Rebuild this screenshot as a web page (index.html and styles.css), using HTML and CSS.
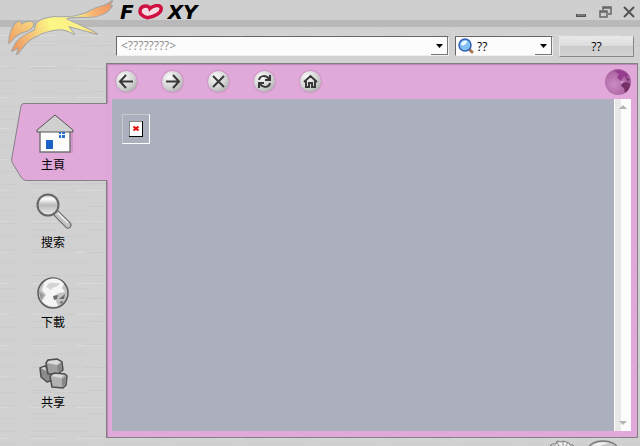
FILE: index.html
```html
<!DOCTYPE html>
<html lang="zh-Hant">
<head>
<meta charset="utf-8">
<meta name="viewport" content="width=device-width, initial-scale=1">
<title>Foxy</title>
<link rel="stylesheet" href="styles.css">
</head>
<body>
<div class="app">
  <header class="header">
    <svg class="fox" viewBox="0 0 116 62" aria-hidden="true">
      <defs>
        <linearGradient id="fur" gradientUnits="userSpaceOnUse" x1="10" y1="50" x2="112" y2="0">
          <stop offset="0" stop-color="#ec9058"/>
          <stop offset=".2" stop-color="#f4bd78"/>
          <stop offset=".42" stop-color="#fcf684"/>
          <stop offset=".65" stop-color="#fbf089"/>
          <stop offset=".8" stop-color="#f6b472"/>
          <stop offset="1" stop-color="#f19060"/>
        </linearGradient>
        <linearGradient id="head" x1="0" x2="1" y1="1" y2="0">
          <stop offset="0" stop-color="#ee9c60"/>
          <stop offset="1" stop-color="#f8d882"/>
        </linearGradient>
      </defs>
      <g class="fox-shape">
        <path fill="url(#head)" d="M9 43C9 35 13 24 18 22C22 21 21 24 21 25C26 21 32 21 33 23C34 28 28 31 23 32C17 34 13 38 9 43Z"/>
        <path fill="url(#fur)" d="M36 25C38 20 46 18 55 17C70 18 82 16 92 10C99 6 106 7 112 1L109 7L112 6C107 14 98 17 86 17C78 17 70 16 66 19C75 24 88 28 97 34C87 31 77 28 68 26L74 34C68 30 61 28 53 30C43 32 33 37 27 42L17 54L19 47L12 51L16 43C21 36 30 33 35 30Z"/>
      </g>
    </svg>
    <div class="titlebar">
      <h1 class="brand" aria-label="FOXY">
        <span>F</span>
        <svg class="heart" viewBox="0 0 24 14" aria-hidden="true">
          <path d="M9 12C4 11 1 8 3 4C5 1 10 1 11 4C14 1 21 0 21 4C21 8 15 11 9 12Z" fill="#f6dce2" stroke="#ce1140" stroke-width="3"/>
        </svg>
        <span>XY</span>
      </h1>
      <div class="window-buttons">
        <button type="button" aria-label="Minimize"><svg viewBox="0 0 14 14"><path d="M2 10.500h10" stroke="#555" stroke-width="3"/><path d="M3 10h8" stroke="#999"/></svg></button>
        <button type="button" aria-label="Restore"><svg viewBox="0 0 14 14" fill="none" stroke="#666" stroke-width="1.500"><path d="M5 5V2h8v7h-3M5 3h8"/><path d="M2 6h7v6H2zM2 7h7"/></svg></button>
        <button type="button" aria-label="Close"><svg viewBox="0 0 14 14"><path d="M2 2l10 10M12 2L2 12" stroke="#555" stroke-width="2"/></svg></button>
      </div>
    </div>
    <form class="toolbar">
      <div class="field address">
        <input type="text" aria-label="Address" placeholder="&lt;????????&gt;">
        <button class="drop" type="button" aria-label="Show history"><svg viewBox="0 0 7 4"><path d="M0 0h7L3.500 4z"/></svg></button>
      </div>
      <div class="field engine">
        <svg class="lens" viewBox="0 0 16 16" aria-hidden="true">
          <path d="M11 11l3 3" stroke="#a8764c" stroke-width="3" stroke-linecap="round"/>
          <circle cx="7" cy="7" r="6" fill="#84c0f4" stroke="#3160b8" stroke-width="1.500"/>
          <path d="M3 7C3 4 6 2 9 3C9 6 6 8 3 7Z" fill="#f1faff"/>
        </svg>
        <select aria-label="Search type"><option>??</option></select>
        <span class="drop" aria-hidden="true"><svg viewBox="0 0 7 4"><path d="M0 0h7L3.500 4z"/></svg></span>
      </div>
      <button class="go" type="submit">??</button>
    </form>
  </header>

  <nav class="sidebar">
    <a class="item active" href="#home" aria-current="page">
      <svg class="tab" viewBox="0 0 97 78" preserveAspectRatio="none" aria-hidden="true">
        <path d="M97 .500H13Q10.500 .500 10 3L.700 56Q.500 59 2 61L10 74Q12 77.500 15 77.500H97" fill="#e1a8da"/>
        <path d="M96 .500H13Q10.500 .500 10 3L.700 56Q.500 59 2 61L10 74Q12 77.500 15 77.500H96" fill="none" stroke="#858085"/>
      </svg>
      <svg class="icon" viewBox="0 0 40 40" aria-hidden="true">
        <path d="M8 18h30v23H8z" fill="#c48bbf" opacity=".6"/>
        <path d="M5 17L20 4l15 13v22H5z" fill="#fcfcfc" stroke="#777" stroke-width="1.500"/>
        <path d="M2 17L20 2l18 15v2H2z" fill="#d0d0d0" stroke="#555"/>
        <path d="M11 27h7v9h-7z" fill="#1c62c4"/>
        <path d="M24 19h2v2h-2zM27 19h3v2h-3zM24 22h2v3h-2zM27 22h3v3h-3z" fill="#2870cf"/>
      </svg>
      <span>主頁</span>
    </a>
    <a class="item" href="#search">
      <svg class="icon" viewBox="0 0 40 40" aria-hidden="true">
        <defs><linearGradient id="glass" x1="0" x2="0" y1="0" y2="1"><stop offset="0" stop-color="#c0c0c0"/><stop offset=".2" stop-color="#fff"/><stop offset=".5" stop-color="#bbb"/><stop offset="1" stop-color="#ededed"/></linearGradient></defs>
        <path d="M22 23l11 11" stroke="#666" stroke-width="7" stroke-linecap="round"/>
        <path d="M22 23l11 11" stroke="#c4c4c4" stroke-width="5" stroke-linecap="round"/>
        <path d="M23 22l10 10" stroke="#f0f0f0" stroke-width="1.500"/>
        <circle cx="13" cy="14" r="10.500" fill="url(#glass)" stroke="#666" stroke-width="2"/>
      </svg>
      <span>搜索</span>
    </a>
    <a class="item" href="#download">
      <svg class="icon" viewBox="0 0 40 40" aria-hidden="true">
        <circle cx="18" cy="22" r="15" fill="#c2c2c2" stroke="#5c5c5c" stroke-width="1.500"/>
        <path d="M9 12C14 6 24 6 29 13L27 17L30 21L24 22L19 25L23 35C17 37 10 34 7 30L11 24L7 19Z" fill="#f5f5f5"/>
        <path d="M13 13C17 10 21 13 25 12C23 17 18 15 16 19L11 16Z" fill="#d5d5d5"/>
        <path d="M18 25l5-1-1 4-3 1zM24 28l6-5-1 5zM24 31l4-1-1 3z" fill="#6f6f6f"/>
        <path d="M4 20l5 4-3 5z" fill="#999"/>
      </svg>
      <span>下載</span>
    </a>
    <a class="item" href="#share">
      <svg class="icon" viewBox="0 0 40 40" aria-hidden="true">
        <g stroke="#4e4e4e" stroke-width="1.500" stroke-linejoin="round">
          <path d="M5 17l5-2 8 2v12l-6 2-6-5z" fill="#8b8b8b"/>
          <path d="M11 12l2-3 9-1 5 3 1 8-5 4H13z" fill="#a0a0a0"/>
          <path d="M15 25l4-3 11 1 2 2-1 9-3 3-11-1z" fill="#b2b2b2"/>
        </g>
        <path d="M12 12l2-2 8-1 4 2-4 3zM16 25l4-2 9 1-3 3zM6 17l4-1 1 4z" fill="#dadada"/>
        <path d="M22 15l4-3 1 7-4 3zM27 28l4-3-1 8-3 3z" fill="#868686"/>
      </svg>
      <span>共享</span>
    </a>
  </nav>

  <main class="panel">
    <div class="nav">
      <button type="button" aria-label="Back"><svg viewBox="0 0 21 21"><path d="M17 10.500H4M10 4l-6 6.500 6 6.500"/></svg></button>
      <button type="button" aria-label="Forward"><svg viewBox="0 0 21 21"><path d="M4 10.500h13M11 4l6 6.500-6 6.500"/></svg></button>
      <button type="button" aria-label="Stop"><svg viewBox="0 0 21 21"><path d="M5 5l11 11M16 5L5 16"/></svg></button>
      <button type="button" aria-label="Refresh"><svg viewBox="0 0 21 21"><path d="M5 9C6 4 12 4 15 8M16 4v5h-5M16 12C15 17 9 17 6 13M5 17v-5h5"/></svg></button>
      <button type="button" aria-label="Home"><svg viewBox="0 0 21 21"><path d="M4 11l6.500-6 6.500 6M6 10v6h3v-4h3v4h3v-6"/></svg></button>
      <svg class="globe" viewBox="0 0 26 26" aria-hidden="true">
        <defs><radialGradient id="orb" cx=".35" cy=".6" r=".7"><stop offset="0" stop-color="#c98cc2"/><stop offset=".6" stop-color="#b26ba8"/><stop offset="1" stop-color="#9d5694"/></radialGradient></defs>
        <circle cx="13" cy="13" r="13" fill="url(#orb)"/>
        <path d="M9 2C14 0 20 2 23 6L21 9L19 7L16 12L12 9L14 5Z" fill="#963b8e"/>
        <path d="M17 14l5-1 3 2c0 4-2 7-5 9l-1-5-3-2zM21 8l4 3-3 1z" fill="#743168"/>
        <path d="M12 9l3 4 4-1-2 3z" fill="#dfa7d8"/>
      </svg>
    </div>
    <div class="view">
      <div class="page">
        <div class="missing" role="img" aria-label="Missing picture">
          <svg viewBox="0 0 14 16" aria-hidden="true">
            <path d="M0 0h14v16H0z" fill="#000"/><path d="M0 0h13v15H0z" fill="#888"/><path d="M1 1h12v14H1z" fill="#fff"/>
            <path d="M4.500 5.500l5 4M9.500 5.500l-5 4" stroke="#e80a0a" stroke-width="2"/>
          </svg>
        </div>
      </div>
      <div class="scroll" aria-hidden="true">
        <svg viewBox="0 0 8 4"><path d="M0 4h8L4 0z"/></svg>
        <svg viewBox="0 0 8 4"><path d="M0 0h8L4 4z"/></svg>
      </div>
    </div>
  </main>

  <footer class="footer">
    <svg class="gear" viewBox="0 0 24 6" aria-hidden="true"><path d="M0 6l2-2 4 0 1-3 4 1 2-1 3 1 3 1 1 2 3 0 1 2z" fill="#eee" stroke="#777"/><path d="M7 2l2 4M13 1v5M18 2l-2 4" stroke="#888"/></svg>
    <svg class="disc" viewBox="0 0 30 6" aria-hidden="true"><ellipse cx="15" cy="8" rx="14" ry="7" fill="#c8c8c8" stroke="#777" stroke-width="1.500"/><path d="M4 6C9 1 17 2 21 3L11 6H4z" fill="#eee"/></svg>
  </footer>
</div>
</body>
</html>
```
FILE: styles.css
```css
* {
  box-sizing: border-box;
}

body {
  margin: 0;
  font: 12px/20px "Open Sans", "Noto Sans CJK TC", sans-serif;
  color: #000;
}

button,
input,
select {
  margin: 0;
  padding: 0;
  border: 0;
  background: none;
  font: inherit;
  color: inherit;
}

svg {
  display: block;
}

/* Brushed metal: short light and dark scratches over a flat grey. */
.app {
  display: grid;
  grid-template: auto 1fr 8px / 106px 1fr;
  min-height: 100vh;
  background:
    linear-gradient(90deg, transparent 8px, #dadada 8px 34px, transparent 34px) 0 4px / 57px 1px,
    #d1d1d1;
  background:
    conic-gradient(from 90deg at 30px 22px, #cacaca 25%, transparent 0) 0 0 / 55px 23px,
    conic-gradient(from 90deg at 20px 30px, #d9d9d9 25%, transparent 0) 9px 5px / 47px 31px,
    conic-gradient(from 90deg at 12px 12px, #cccccc 25%, transparent 0) 20px 3px / 71px 13px,
    #d1d1d1;
}

.header {
  grid-column: 1 / -1;
  display: grid;
  grid-template: 27px 36px / 116px 1fr;
  background: linear-gradient(#cfcfcf 0 20px, #b9b9b9 20px 27px, transparent 27px);
}

.fox {
  grid-row: 1 / 3;
  width: 116px;
  height: 62px;
}

.fox-shape {
  stroke: #a4a6a8;
  stroke-width: 2;
  stroke-linejoin: round;
  paint-order: stroke;
}

.titlebar {
  display: flex;
  justify-content: space-between;
  padding: 0 4px;
}

.brand {
  display: flex;
  align-items: center;
  gap: 3px;
  height: 24px;
  margin: 0;
  font: italic bold 20px/24px "DejaVu Sans", sans-serif;
}

.heart {
  width: 28px;
  height: 16px;
}

.window-buttons {
  display: flex;
  gap: 10px;
  padding-top: 5px;
}

.window-buttons button,
.window-buttons svg {
  width: 14px;
  height: 14px;
}

.toolbar {
  display: flex;
  gap: 6px;
  padding: 9px 6px 7px 0;
}

.field {
  display: flex;
  height: 20px;
  background: #fcfcfc;
  border: 1px solid #f0f0f0;
  border-top-color: #666;
  border-left-color: #666;
}

.address {
  flex: 1;
}

.address input {
  flex: 1;
  min-width: 0;
  padding-left: 4px;
  outline: 0;
}

.address input::placeholder {
  color: #8c8c8c;
  opacity: 1;
}

.engine {
  position: relative;
  width: 98px;
}

.lens {
  width: 16px;
  height: 16px;
  margin: 1px 0 0 2px;
}

.engine select {
  flex: 1;
  appearance: none;
  padding-left: 3px;
}

.drop {
  display: grid;
  place-items: center;
  width: 17px;
  height: 18px;
  border-right: 1px solid #777;
  border-bottom: 1px solid #777;
  background: #fcfcfc;
}

.drop svg {
  width: 7px;
  height: 4px;
}

.engine .drop {
  position: absolute;
  top: 0;
  right: 0;
  pointer-events: none;
}

.go {
  width: 75px;
  height: 21px;
  border: 1px solid #e6e6e6;
  border-right-color: #888;
  border-bottom-color: #888;
  background: linear-gradient(#e9e9e9, #dadada 50%, #cbcbcb 50%, #d4d4d4);
}

.sidebar {
  position: relative;
  z-index: 1;
  padding-top: 40px;
}

.item {
  position: relative;
  display: flex;
  flex-direction: column;
  align-items: center;
  gap: 2px;
  height: 80px;
  padding-top: 10px;
  color: #000;
  text-decoration: none;
}

.item.active {
  height: 78px;
}

.tab {
  position: absolute;
  inset: 0 -2px 0 11px;
  width: 97px;
  height: 78px;
}

.icon {
  position: relative;
  width: 40px;
  height: 40px;
  margin-left: 4px;
}

.item span {
  position: relative;
}

.panel {
  display: flex;
  flex-direction: column;
  margin-right: 2px;
  padding: 0 6px 6px 5px;
  border: 1px solid #808080;
  background: #e1a8da;
  box-shadow: inset 1px 1px 1px #b987b3;
}

.nav {
  display: flex;
  align-items: center;
  gap: 25px;
  height: 35px;
  padding-left: 4px;
}

.nav button,
.nav button svg {
  width: 21px;
  height: 21px;
}

.nav button {
  border-radius: 50%;
  background: radial-gradient(circle at 35% 30%, #fafafa, #cfcfcf 55%, #969696);
  box-shadow: 0 0 2px #99658f;
}

.nav button svg {
  fill: none;
  stroke: #383838;
  stroke-width: 2;
}

.globe {
  width: 26px;
  height: 26px;
  margin-left: auto;
}

.view {
  flex: 1;
  display: flex;
}

.page {
  flex: 1;
  padding: 15px 10px;
  background: #acafbd;
}

.missing {
  width: 28px;
  height: 30px;
  padding: 6px;
  border: 1px solid #fff;
  border-top-color: #c8c8c8;
  border-left-color: #c8c8c8;
}

.missing svg {
  width: 14px;
  height: 16px;
}

.scroll {
  display: flex;
  flex-direction: column;
  justify-content: space-between;
  align-items: center;
  width: 17px;
  padding: 6px 0;
  border-left: 1px solid #fff;
  background: linear-gradient(90deg, #e8e8e8 6px, #fcfcfc 6px);
}

.scroll svg {
  width: 8px;
  height: 4px;
  fill: #b4b4b4;
}

.footer {
  grid-column: 1 / -1;
  display: flex;
  justify-content: flex-end;
  align-items: flex-end;
  gap: 14px;
  height: 8px;
  padding-right: 22px;
}

.gear {
  width: 24px;
  height: 6px;
}

.disc {
  width: 30px;
  height: 6px;
}
```
